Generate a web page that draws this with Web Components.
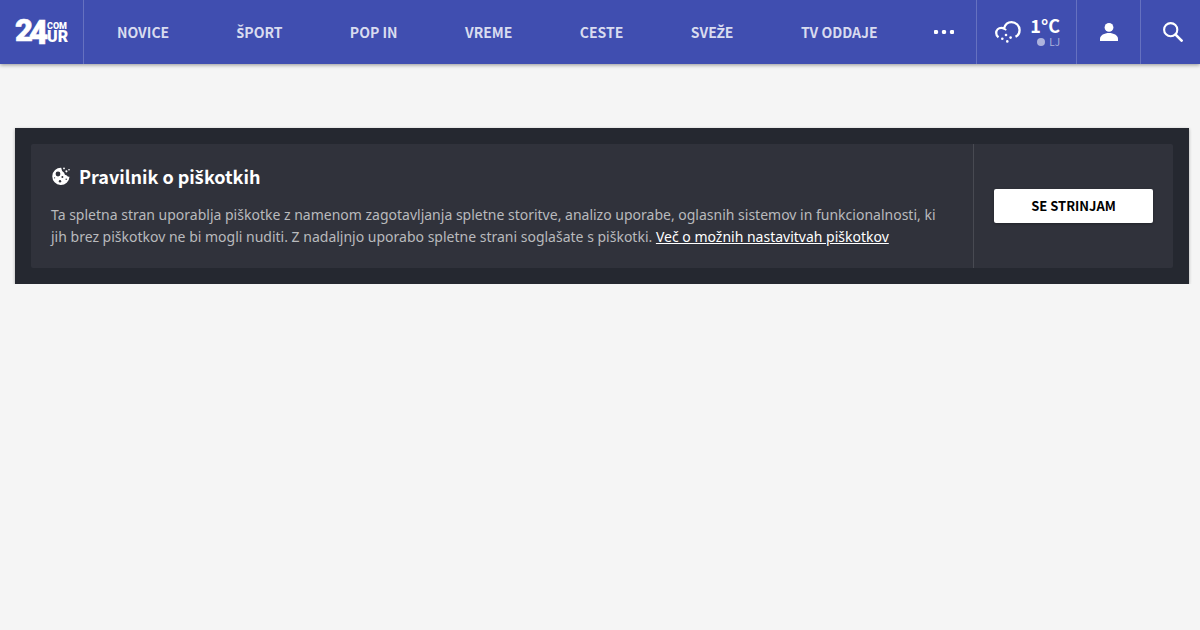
<!DOCTYPE html>
<html lang="sl">
<head>
<meta charset="utf-8">
<meta name="viewport" content="width=device-width, initial-scale=1">
<title>24ur.com</title>
<style>
  body { margin: 0; background: #f5f5f5; font-family: "Noto Sans CJK JP", "Noto Sans", sans-serif; font-size: 14px; }
  /* the CJK family has no composed caron letters */
  .caron { font-family: "Noto Sans", sans-serif; line-height: 0; }
</style>
</head>
<body>
<site-header>
  <site-logo slot="logo"></site-logo>
  <nav-item href="#novice">NOVICE</nav-item>
  <nav-item href="#sport">ŠPORT</nav-item>
  <nav-item href="#popin">POP IN</nav-item>
  <nav-item href="#vreme">VREME</nav-item>
  <nav-item href="#ceste">CESTE</nav-item>
  <nav-item href="#sveze">SVEŽE</nav-item>
  <nav-item href="#tv">TV ODDAJE</nav-item>
  <weather-badge slot="tools"><span slot="temp">1°C</span><span slot="city">LJ</span></weather-badge>
  <icon-button slot="tools" label="Prijava">
    <svg width="18" height="18" viewBox="0 0 18 18" fill="#fff"><circle cx="9" cy="4.4" r="4.4"/><path d="M0 17.9v-2.2C0 12.2 4.4 9.9 9 9.9s9 2.3 9 5.8v2.2z"/></svg>
  </icon-button>
  <icon-button slot="tools" label="Iskanje">
    <svg width="20" height="20" viewBox="0 0 20 20" fill="none" stroke="#fff"><circle cx="7.7" cy="7.7" r="6.6" stroke-width="2.1"/><path d="M12.6 12.6L18.6 18.6" stroke-width="2.7" stroke-linecap="round"/></svg>
  </icon-button>
</site-header>
<cookie-notice>
  <span slot="title">Pravilnik o piškotkih</span>
  Ta spletna stran uporablja piškotke z namenom zagotavljanja spletne storitve, analizo uporabe, oglasnih sistemov in funkcionalnosti, ki jih brez piškotkov ne bi mogli nuditi. Z nadaljnjo uporabo spletne strani soglašate s piškotki.
  <a slot="more" href="#piskotki" style="color:#fff">Več o možnih nastavitvah piškotkov</a>
  <span slot="accept">SE STRINJAM</span>
</cookie-notice>

<script>
// Wraps letters with a caron so that they take a font that has them.
const wrapCarons = host => {
  const walker = document.createTreeWalker(host, NodeFilter.SHOW_TEXT);
  const nodes = [];
  while (walker.nextNode()) nodes.push(walker.currentNode);
  for (const node of nodes) {
    if (!/[ČŠŽčšž]/.test(node.data)) continue;
    node.replaceWith(...node.data.split(/([ČŠŽčšž])/).filter(Boolean).map(part => {
      if (!/^[ČŠŽčšž]$/.test(part)) return part;
      const span = document.createElement("span");
      span.className = "caron";
      span.textContent = part;
      return span;
    }));
  }
};

const define = (name, html, setup) => customElements.define(name, class extends HTMLElement {
  constructor() {
    super();
    this.attachShadow({ mode: "open" }).innerHTML = html;
  }
  connectedCallback() { if (setup) setup(this, this.shadowRoot); }
});

define("site-header", `
<style>
  :host { display: block; background: #404eb0; color: #fff; box-shadow: 0 1px 4px rgba(0,0,0,.4); }
  header { display: flex; height: 64px; }
  nav { display: flex; flex: 1; justify-content: space-between; }
  button { flex: 0 0 64px; display: grid; place-items: center; padding: 0; border: 0; background: none; }
  svg { display: block; }
</style>
<header>
  <slot name="logo"></slot>
  <nav><slot></slot><button aria-label="Več"><svg width="20" height="4" viewBox="0 0 20 4" fill="#fff"><circle cx="2" cy="2" r="2.2"/><circle cx="10" cy="2" r="2.2"/><circle cx="18" cy="2" r="2.2"/></svg></button></nav>
  <slot name="tools"></slot>
</header>`);

define("site-logo", `
<style>
  :host { display: flex; flex: 0 0 83px; border-right: 1px solid #6671c0; }
  a { display: flex; flex: 1; align-items: center; justify-content: center; color: #fff; text-decoration: none; font-family: Roboto, "Liberation Sans", sans-serif; font-weight: 900; }
  svg { display: block; overflow: visible; }
</style>
<a href="#" aria-label="24ur.com"><svg width="52" height="28" viewBox="0 0 52 28" fill="#fff">
  <text x="-1" y="23" font-size="31" stroke="#fff" stroke-width=".6">2</text><text x="13" y="26" font-size="33" stroke="#fff" stroke-width=".6">4</text>
  <text x="31" y="11" font-size="9">COM</text><text x="31" y="24" font-size="16">UR</text>
</svg></a>`);

define("nav-item", `
<style>
  :host { display: flex; }
  a { display: flex; align-items: center; padding: 0 33px; color: #d9dcef; font-size: 14px; font-weight: 700; text-decoration: none; white-space: nowrap; }
</style>
<a><span><slot></slot></span></a>`, (host, root) => {
  root.querySelector("a").href = host.getAttribute("href");
  wrapCarons(host);
});

define("weather-badge", `
<style>
  :host { display: flex; flex: 0 0 99px; border-left: 1px solid #6671c0; }
  a { flex: 1; display: flex; align-items: center; justify-content: space-between; padding: 0 16px 0 18px; color: #fff; text-decoration: none; }
  .temp { font-size: 18px; font-weight: 700; line-height: 20px; }
  .city { display: flex; align-items: center; justify-content: flex-end; gap: 4px; font-size: 10px; line-height: 14px; color: #adb3dd; }
  .city i { width: 8px; height: 8px; border-radius: 50%; background: #adb3dd; }
  svg { display: block; }
</style>
<a href="#vreme"><svg width="26" height="22" viewBox="0 0 26 22" fill="#fff"><path d="M3.5 16.3C1.8 15.1 1.2 13.5 1.2 12C1.2 8.9 3.6 6.8 6.3 6.8C7.4 6.8 8.3 7.1 9 7.5C10.1 3.7 13 1.2 16.5 1.2C21 1.2 24.6 4.7 24.6 9C24.6 12.2 23 14.6 20.5 15.8" fill="none" stroke="#fff" stroke-width="2.3"/><path d="M8.5 7.3Q10.3 8 11.2 9.3" fill="none" stroke="#fff" stroke-width="1.6"/><circle cx="11" cy="14" r="1.3"/><circle cx="7.3" cy="17.7" r="1.3"/><circle cx="15.6" cy="16.6" r="1.3"/><circle cx="12.3" cy="20.4" r="1.3"/></svg>
<div><div class="temp"><slot name="temp"></slot></div><div class="city"><i></i><slot name="city"></slot></div></div></a>`);

define("icon-button", `
<style>
  :host { display: flex; flex: 0 0 63px; border-left: 1px solid #6671c0; }
  :host(:last-child) { flex-basis: 59px; }
  :host(:last-child) button { padding-left: 5px; }
  button { flex: 1; display: grid; place-items: center; padding: 0; border: 0; background: none; }
</style>
<button><slot></slot></button>`, (host, root) => { root.querySelector("button").setAttribute("aria-label", host.getAttribute("label")); });

define("cookie-notice", `
<style>
  :host { display: block; margin: 64px 11px 0 15px; padding: 16px; background: #252830; box-shadow: 0 1px 3px rgba(0,0,0,.3); }
  section { display: flex; background: #30323b; border-radius: 2px; }
  .copy { flex: 1; padding: 20px; }
  h2 { display: flex; align-items: center; gap: 9px; margin: 0 0 16px; font-size: 18px; line-height: 24px; color: #fff; }
  svg { display: block; margin-left: 1px; }
  p { margin: 0; font-family: "Noto Sans", sans-serif; font-size: 14px; line-height: 22px; color: #b9babd; }
  .action { flex: 0 0 159px; display: flex; align-items: center; padding: 0 20px; border-left: 1px solid #484a52; }
  button { flex: 1; height: 34px; padding: 0 0 2px; border: 0; border-radius: 2px; background: #fff; color: #000; font-family: inherit; font-size: 13px; font-weight: 700; box-shadow: 0 1px 3px rgba(0,0,0,.3); }
</style>
<section>
  <div class="copy">
    <h2><svg width="18" height="18" viewBox="0 0 18 18" fill="#fff"><path d="M9.2.8A8.6 8.6 0 1 0 17.5 9.8Q15.8 10.2 14.8 8.4Q12.4 8.4 12.1 5.8Q9.5 4.6 9.2.8Z"/><circle cx="12" cy="1.4" r=".9"/><circle cx="14.4" cy="4.3" r="1.1"/><circle cx="17" cy="2.8" r=".8"/><g fill="#30323b"><circle cx="6" cy="7" r="2.4"/><circle cx="10.4" cy="10.1" r="1"/><circle cx="8" cy="14.2" r="1.2"/><circle cx="14.2" cy="12.3" r=".7"/><circle cx="2.6" cy="10.8" r=".6"/></g></svg><span><slot name="title"></slot></span></h2>
    <p><slot></slot> <slot name="more"></slot></p>
  </div>
  <div class="action"><button><slot name="accept"></slot></button></div>
</section>`, host => wrapCarons(host.querySelector("[slot=title]")));
</script>
</body>
</html>
